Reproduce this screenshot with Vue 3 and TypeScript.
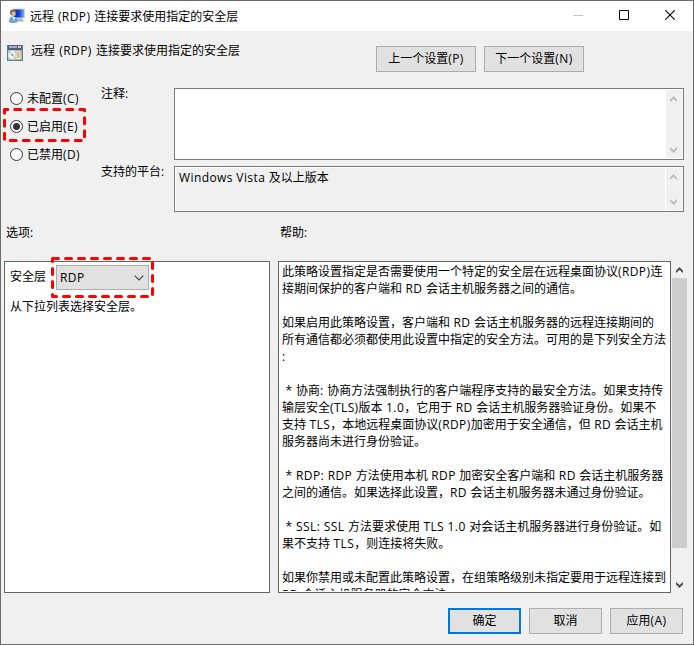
<script setup lang="ts">
import { h, ref } from 'vue'

interface State { id: string; label: string }

/* Sets Latin runs slightly wider than the Chinese text around them. */
const Mixed = (props: { text: string }) =>
  (props.text.match(/[\x20-\x7e]+|[^\x20-\x7e]+/g) ?? []).map((run) =>
    h('span', { class: /^[\x20-\x7e]/.test(run) ? 'latin' : 'han' }, run),
  )
Mixed.props = ['text']

const title = '远程 (RDP) 连接要求使用指定的安全层'
const states: State[] = [
  { id: 'unset', label: '未配置(C)' },
  { id: 'enabled', label: '已启用(E)' },
  { id: 'disabled', label: '已禁用(D)' },
]
const selected = ref('enabled')
const helpLines: string[] = [
  '此策略设置指定是否需要使用一个特定的安全层在远程桌面协议(RDP)连',
  '接期间保护的客户端和 RD 会话主机服务器之间的通信。',
  '',
  '如果启用此策略设置，客户端和 RD 会话主机服务器的远程连接期间的',
  '所有通信都必须都使用此设置中指定的安全方法。可用的是下列安全方法',
  ':',
  '',
  ' * 协商: 协商方法强制执行的客户端程序支持的最安全方法。如果支持传',
  '输层安全(TLS)版本 1.0，它用于 RD 会话主机服务器验证身份。如果不',
  '支持 TLS，本地远程桌面协议(RDP)加密用于安全通信，但 RD 会话主机',
  '服务器尚未进行身份验证。',
  '',
  ' * RDP: RDP 方法使用本机 RDP 加密安全客户端和 RD 会话主机服务器',
  '之间的通信。如果选择此设置，RD 会话主机服务器未通过身份验证。',
  '',
  ' * SSL: SSL 方法要求使用 TLS 1.0 对会话主机服务器进行身份验证。如',
  '果不支持 TLS，则连接将失败。',
  '',
  '如果你禁用或未配置此策略设置，在组策略级别未指定要用于远程连接到',
  'RD 会话主机服务器的安全方法。',
]
</script>

<template>
  <div class="window">
    <header class="titlebar">
      <svg class="app-icon" viewBox="0 0 16 16">
        <defs>
          <linearGradient id="screen" x1="0" y1="0" x2="1" y2="0">
            <stop offset="0" stop-color="#0a1fa8" />
            <stop offset=".55" stop-color="#1c49dc" />
            <stop offset="1" stop-color="#7fb0f5" />
          </linearGradient>
        </defs>
        <path d="M4 .5h12v10H4z" fill="#cdd3da" />
        <path d="M5 1.500h10v8H5z" fill="url(#screen)" />
        <path d="M9 10.500h4l2 3H8z" fill="#aab2ba" />
        <circle cx="4" cy="4.500" r="3" fill="#7d6448" />
        <ellipse cx="4.700" cy="5.700" rx="2" ry="2.500" fill="#dfb58e" />
        <path d="M0 14c0-4 1.500-5.500 4-5.500s5 1.500 5 5c-2 2-7 2-9 .5z" fill="#6aa5d2" />
        <path d="M3.500 9l1.500 4 1.500-4z" fill="#eef5fa" />
      </svg>
      <h1><Mixed :text="title" /></h1>
      <div class="controls">
        <svg viewBox="0 0 11 12"><path d="M0 5.500h10" stroke="#c6c6c6" /></svg>
        <svg viewBox="0 0 11 12"><path d="M.5.5h9v9h-9z" fill="none" stroke="#000" /></svg>
        <svg viewBox="0 0 11 12"><path d="M.3.3l9.400 9.400M9.700.3L.3 9.700" stroke="#000" stroke-width="1.100" /></svg>
      </div>
    </header>

    <section class="heading">
      <svg class="policy-icon" viewBox="0 0 16 16">
        <path d="M0 0h16v16H0z" fill="#4c8a8a" />
        <path d="M1 0h14v5H1z" fill="#565a86" />
        <path d="M2 1h8v2H2z" fill="#a9acc6" />
        <path d="M11 1h3v2h-3z" fill="#d9d2a8" />
        <path d="M1 5h14v10H1z" fill="#b9c2bb" />
        <circle cx="5.500" cy="10" r="4.300" fill="#eef2ee" />
        <path d="M5.500 10L1.800 8a4.300 4.300 0 0 1 2-1.900z" fill="#b7e2bd" />
        <path d="M5.500 10l3.500 2.500a4.300 4.300 0 0 1-2 1.500z" fill="#e6c3dc" />
        <circle cx="5.500" cy="10" r="1" fill="#85858f" />
        <path d="M9 6h5v8.500H9z" fill="#fdf3d2" stroke="#a89c74" stroke-width=".6" />
        <path d="M10 8h3M10 10h3M10 12h3" stroke="#8d8468" stroke-width=".8" />
      </svg>
      <h2><Mixed :text="title" /></h2>
      <div class="nav">
        <button class="btn"><Mixed text="上一个设置(P)" /></button>
        <button class="btn"><Mixed text="下一个设置(N)" /></button>
      </div>
    </section>

    <section class="config">
      <div class="states">
        <label v-for="s in states" :key="s.id" class="state" @click="selected = s.id">
          <span class="radio" :class="{ on: selected === s.id }"></span>
          <span><Mixed :text="s.label" /></span>
          <svg v-if="s.id === 'enabled'" class="mark" viewBox="0 0 83 34">
            <path d="M1.500 1.500H81.500V32.500H1.500z" />
          </svg>
        </label>
      </div>
      <div class="fields">
        <span class="caption">注释:</span>
        <div class="box comment">
          <div class="bar">
            <svg viewBox="0 0 7 6"><path d="M0 6V3.500L3.500 0 7 3.500V6L3.500 3z" /></svg>
            <svg viewBox="0 0 7 6"><path d="M0 0v2.500L3.500 6 7 2.500V0L3.500 3z" /></svg>
          </div>
        </div>
        <span class="caption">支持的平台:</span>
        <div class="box platform">
          <span class="value"><Mixed text="Windows Vista 及以上版本" /></span>
          <div class="bar">
            <svg viewBox="0 0 7 6"><path d="M0 6V3.500L3.500 0 7 3.500V6L3.500 3z" /></svg>
            <svg viewBox="0 0 7 6"><path d="M0 0v2.500L3.500 6 7 2.500V0L3.500 3z" /></svg>
          </div>
        </div>
      </div>
    </section>

    <section class="labels"><span>选项:</span><span>帮助:</span></section>

    <section class="panels">
      <div class="options">
        <div class="option-row">
          <span>安全层</span>
          <div class="select">
            <span><Mixed text="RDP" /></span>
            <svg class="chev" viewBox="0 0 10 6"><path d="M.7.700l4.300 4.300L9.300.7" /></svg>
            <svg class="mark" viewBox="0 0 103 41"><path d="M1.500 1.500H101.500V39.500H1.500z" /></svg>
          </div>
        </div>
        <p>从下拉列表选择安全层。</p>
      </div>
      <div class="help">
        <div class="help-text">
          <div v-for="(line, i) in helpLines" :key="i" class="line"><Mixed :text="line" /></div>
        </div>
      </div>
      <div class="scroll">
        <svg viewBox="0 0 7 6"><path d="M0 6V3.500L3.500 0 7 3.500V6L3.500 3z" /></svg>
        <div class="thumb"></div>
        <svg viewBox="0 0 7 6"><path d="M0 0v2.500L3.500 6 7 2.500V0L3.500 3z" /></svg>
      </div>
    </section>

    <footer class="actions">
      <button class="btn primary">确定</button>
      <button class="btn">取消</button>
      <button class="btn"><Mixed text="应用(A)" /></button>
    </footer>
  </div>
</template>

<style>
body { margin: 0; overflow: hidden; }
.latin { letter-spacing: .4px; white-space: pre; }
</style>

<style scoped>
* { box-sizing: border-box; }
svg { display: block; flex: none; }
h1, h2, p { margin: 0; font-size: 12px; font-weight: 400; }
.window {
  width: 694px; height: 645px; background: #f0f0f0; color: #000;
  border: 1px solid #6b6b6b; display: flex; flex-direction: column;
  font: 12px/17px "Open Sans", "Noto Sans CJK SC", sans-serif;
}
.titlebar { height: 30px; flex: none; background: #fff; display: flex; align-items: center; padding-left: 8px; }
.app-icon { width: 16px; height: 16px; }
h1 { margin-left: 5px; word-spacing: .4px; }
.controls { margin-left: auto; display: flex; gap: 35px; padding-right: 17px; }
.controls svg { width: 11px; height: 12px; }
.heading { height: 57px; flex: none; display: flex; align-items: flex-start; padding: 14px 0 0 6px; }
.policy-icon { width: 16px; height: 16px; }
h2 { margin: -3px 0 0 8px; width: 345px; word-spacing: .8px; }
.nav { display: flex; gap: 8px; margin-top: 1px; }
.btn {
  width: 73px; height: 26px; padding: 0 0 1px; background: #e1e1e1; border: 1px solid #adadad;
  font: inherit; color: #000; border-radius: 0;
}
.nav .btn { width: 100px; }
.config { height: 134px; flex: none; display: flex; }
.states { width: 100px; display: flex; flex-direction: column; padding: 2px 0 0 9px; gap: 11px; }
.state { position: relative; display: flex; align-items: center; gap: 4px; height: 17px; white-space: nowrap; }
.state .latin { letter-spacing: .8px; }
.radio { width: 13px; height: 13px; flex: none; border: 1px solid #333; border-radius: 50%; background: #fff; padding: 2px; }
.radio.on::before { content: ""; display: block; width: 7px; height: 7px; border-radius: 50%; background: #333; }
.mark { position: absolute; fill: none; overflow: visible; }
.mark path { stroke: #fe0000; stroke-width: 3; stroke-dasharray: 6 7; stroke-linecap: round; stroke-linejoin: round; }
.state .mark { width: 83px; height: 34px; left: -7px; top: -10px; }
.state .mark path { stroke-dashoffset: 2.7; }
.fields { display: grid; grid-template-columns: 73px 510px; grid-template-rows: 72px 46px; row-gap: 6px; }
.caption { margin-top: -3px; }
.box { border: 1px solid #7a7a7a; padding: 1px; display: flex; justify-content: flex-end; background: #fff; }
.platform .value { flex: 1; background: #f0f0f0; padding: 1px 3px; margin-right: 1px; }
.bar { width: 16px; background: #f0f0f0; display: flex; flex-direction: column; align-items: center; justify-content: space-between; padding: 6px 1px 5px 0; }
.bar svg { width: 7px; height: 6px; fill: #bfbfbf; }
.labels { height: 39px; flex: none; display: grid; grid-template-columns: 274px 1fr; padding: 2px 0 0 5px; }
.panels { height: 332px; flex: none; display: flex; padding-left: 3px; }
.options { width: 266px; border: 1px solid #646464; background: #fff; margin-right: 8px; padding: 3px 5px; }
.option-row { display: flex; height: 25px; gap: 10px; line-height: 23px; }
.select { position: relative; width: 93px; height: 25px; background: #e1e1e1; border: 1px solid #adadad; display: flex; align-items: center; justify-content: space-between; padding: 0 4px 0 3px; }
.chev { width: 10px; height: 6px; fill: none; stroke: #444; stroke-width: 1.1; }
.select .mark { width: 103px; height: 41px; left: -6px; top: -9px; }
.options p { margin-top: 8px; }
.help { width: 393px; border: 1px solid #646464; background: #fff; padding: 1px 3px; }
.help-text { height: 328px; overflow: hidden; }
.line { height: 17px; white-space: pre; }
.scroll { width: 16px; display: flex; flex-direction: column; align-items: center; padding: 6px 0 4px 1px; }
.scroll svg { width: 7px; height: 6px; fill: #505050; }
.thumb { width: 15px; height: 270px; background: #cdcdcd; margin: 5px 0 34px; }
.actions { display: flex; justify-content: flex-end; gap: 8px; padding: 15px 10px 0 0; }
.primary { border: 2px solid #0078d7; }
</style>
